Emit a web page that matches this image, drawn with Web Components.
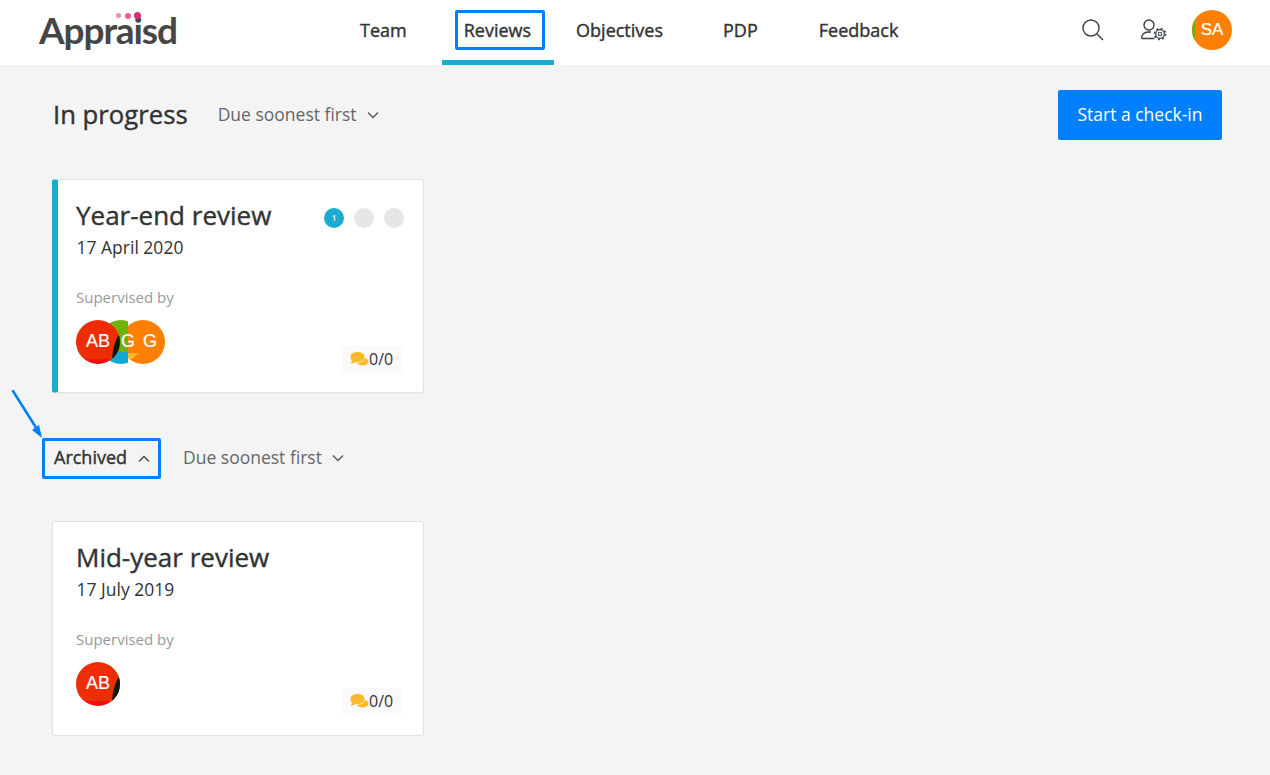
<!DOCTYPE html>
<html lang="en">
<head>
<meta charset="utf-8">
<title>Appraisd - Reviews</title>
<style>
  html, body { margin: 0; padding: 0; }
  body { background: #f4f4f4; color: #333; font-family: "Open Sans", "Liberation Sans", sans-serif; overflow: hidden; }
</style>
</head>
<body>
<app-header>
  <nav-tab gap="0">Team</nav-tab>
  <nav-tab gap="13" active>Reviews</nav-tab>
  <nav-tab gap="0">Objectives</nav-tab>
  <nav-tab gap="16">PDP</nav-tab>
  <nav-tab gap="17">Feedback</nav-tab>
</app-header>

<reviews-page>
  <section-row slot="progress">
    <span slot="title">In progress</span>
    <sort-select slot="sort">Due soonest first</sort-select>
    <start-button slot="action">Start a check-in</start-button>
  </section-row>
  <review-card slot="progress" current>
    <span slot="title">Year-end review</span>
    <span slot="date">17 April 2020</span>
    <step-dots slot="steps"></step-dots>
    <user-avatar slot="people" kind="red">AB</user-avatar>
    <user-avatar slot="people" kind="green">G</user-avatar>
    <user-avatar slot="people" kind="orange">G</user-avatar>
  </review-card>

  <archive-row slot="archived">
    <sort-select slot="sort">Due soonest first</sort-select>
  </archive-row>
  <review-card slot="archived">
    <span slot="title">Mid-year review</span>
    <span slot="date">17 July 2019</span>
    <user-avatar slot="people" kind="red">AB</user-avatar>
  </review-card>
</reviews-page>

<script>
// Clase base: crea el shadow root y pinta lo que devuelve getTemplate()
class BaseElement extends HTMLElement {
  constructor() {
    super();
    this.attachShadow({ mode: "open" });
  }

  connectedCallback() {
    const template = document.createElement("template");
    template.innerHTML = `<style>${this.getStyles()}</style>${this.getTemplate()}`;
    this.shadowRoot.appendChild(template.content.cloneNode(true));
  }
}

class AppHeader extends BaseElement {
  getStyles() {
    return `
      :host { display: flex; align-items: stretch; height: 65px; background: #fff; position: relative; }
      .logo { position: relative; width: 338px; padding-left: 39px; box-sizing: border-box; flex: none;
        font: 700 37px/60px Lato, sans-serif; color: #464646; letter-spacing: -1.100px; }
      .dots { position: absolute; left: 116px; top: 12px; display: flex; align-items: center; gap: 3.500px; }
      .dots i { display: block; border-radius: 50%; }
      .dots i:nth-child(1) { width: 5px; height: 5px; background: #f08cb8; }
      .dots i:nth-child(2) { width: 6px; height: 6px; background: #ec5c9c; }
      .dots i:nth-child(3) { width: 7px; height: 7px; background: #e2267f; }
      nav { display: flex; flex: 1; align-items: stretch; }
      .tools { display: flex; align-items: center; padding: 0 38px 5px 0; }
      .tools svg { display: block; fill: none; stroke: #3a3f4a; stroke-width: 1.400; }
      .search { margin-right: 35px; }
      .people { margin-right: 25px; }
    `;
  }

  getTemplate() {
    return `
      <div class="logo">Appraisd<span class="dots"><i></i><i></i><i></i></span></div>
      <nav><slot></slot></nav>
      <div class="tools">
        <svg class="search" width="24" height="24" viewBox="0 0 24 24">
          <circle cx="10" cy="10" r="8"/><path d="M16 16l6 6"/>
        </svg>
        <svg class="people" width="27" height="24" viewBox="0 0 27 24">
          <circle cx="9" cy="7" r="5"/>
          <path d="M1.500 20c0-3.500 3-6 6.500-6h3M1.500 20.500h13"/>
          <circle cx="20" cy="16" r="4.300" stroke-width="1.200"/>
          <circle cx="20" cy="16" r="5.500" stroke-width="1.700" stroke-dasharray="1.900 2.420"/>
          <circle cx="20" cy="16" r="1.700" stroke-width="1.100"/>
        </svg>
        <user-avatar kind="orange" small>SA</user-avatar>
      </div>
    `;
  }
}

class NavTab extends BaseElement {
  getStyles() {
    const gap = this.getAttribute("gap") || 0;
    return `
      :host { display: flex; align-items: center; height: 65px; box-sizing: border-box; padding: 0 22px;
        margin-left: ${gap}px; border-bottom: 5px solid transparent;
        font: 500 18px "Open Sans", sans-serif; color: #333; -webkit-text-stroke: .4px #333; }
      :host([active]) { border-bottom-color: #1aaccf; padding: 0 9px 0 13px; }
      :host([active]) span { display: block; padding: 0 11px 0 6px; border: 3px solid #0080ff; border-radius: 2px;
        height: 40px; box-sizing: border-box; line-height: 34px; }
    `;
  }

  getTemplate() {
    return `<span><slot></slot></span>`;
  }
}

class ReviewsPage extends BaseElement {
  getStyles() {
    return `
      :host { display: block; padding: 25px 48px 0 52px; }
      .archived { display: block; margin-top: 45px; }
    `;
  }

  getTemplate() {
    return `
      <slot name="progress"></slot>
      <div class="archived"><slot name="archived"></slot></div>
    `;
  }
}

class SectionRow extends BaseElement {
  getStyles() {
    return `
      :host { display: flex; align-items: center; height: 50px; margin-bottom: 39px; }
      .title { font: 500 25.700px "Open Sans", sans-serif; color: #333; margin: -2px 30px 0 1px; -webkit-text-stroke: .4px #333; }
      .grow { flex: 1; }
      ::slotted(sort-select) { margin-top: -2px; }
    `;
  }

  getTemplate() {
    return `
      <div class="title"><slot name="title"></slot></div>
      <slot name="sort"></slot>
      <div class="grow"></div>
      <slot name="action"></slot>
    `;
  }
}

class ArchiveRow extends BaseElement {
  getStyles() {
    return `
      :host { display: flex; align-items: center; height: 41px; margin-bottom: 42px; position: relative; }
      .toggle { display: flex; align-items: center; height: 41px; width: 119px; box-sizing: border-box; margin-left: -10px;
        padding: 0 0 3px 9px; border: 3px solid #0080ff; border-radius: 2px; margin-right: 22px;
        font: 500 18px "Open Sans", sans-serif; color: #333; -webkit-text-stroke: .4px #333; }
      .toggle svg { margin: 3px 0 0 11px; fill: none; stroke: #444; stroke-width: 1.300; }
      .arrow { position: absolute; left: -43px; top: -51px; overflow: visible; }
      ::slotted(sort-select) { margin-top: -3px; }
    `;
  }

  getTemplate() {
    return `
      <svg class="arrow" width="34" height="52" viewBox="0 0 34 52">
        <path d="M4 4l27 43" stroke="#0080ff" stroke-width="2.500" stroke-linecap="round" fill="none"/>
        <path d="M33 51l-10-8 7-5z" fill="#0080ff"/>
      </svg>
      <div class="toggle">Archived
        <svg width="12" height="8" viewBox="0 0 12 8"><path d="M1 6.500l5-5 5 5"/></svg>
      </div>
      <slot name="sort"></slot>
    `;
  }
}

class SortSelect extends BaseElement {
  getStyles() {
    return `
      :host { display: flex; align-items: center; font: 400 17.500px "Open Sans", sans-serif; color: #666; }
      svg { margin: 2px 0 0 10px; fill: none; stroke: #555; stroke-width: 1.300; }
    `;
  }

  getTemplate() {
    return `<slot></slot><svg width="12" height="8" viewBox="0 0 12 8"><path d="M1 1.500l5 5 5-5"/></svg>`;
  }
}

class StartButton extends BaseElement {
  getStyles() {
    return `
      :host { display: flex; align-items: center; justify-content: center; width: 164px; height: 50px;
        box-sizing: border-box; padding-bottom: 2px;
        background: #007fff; color: #fff; border-radius: 2px; font: 500 17.500px "Open Sans", sans-serif; }
    `;
  }

  getTemplate() {
    return `<slot></slot>`;
  }
}

class ReviewCard extends BaseElement {
  getStyles() {
    return `
      :host { display: block; width: 372px; box-sizing: border-box; background: #fff; border: 1px solid #e2e2e2;
        border-radius: 3px; padding: 20px 19px 20px 23px; box-shadow: 0 1px 1px rgba(0,0,0,.04); }
      :host([current]) { border-left: 6px solid #1aaccf; padding: 20px 19px 19px 18px; }
      .top { display: flex; justify-content: space-between; align-items: flex-start; height: 32px; }
      .title { font: 500 26px/32px "Open Sans", sans-serif; color: #333; margin-top: -1px; -webkit-text-stroke: .4px #333; }
      .date { font: 400 17.500px/24px "Open Sans", sans-serif; color: #333; margin-top: 3px; padding-left: .5px; }
      .label { font: 400 15px/20px "Open Sans", sans-serif; color: #999; margin-top: 28px; }
      .bottom { display: flex; justify-content: space-between; align-items: flex-end; margin-top: 13px; height: 53px; }
      .people { display: flex; align-self: flex-start; }
    `;
  }

  getTemplate() {
    return `
      <div class="top">
        <div class="title"><slot name="title"></slot></div>
        <slot name="steps"></slot>
      </div>
      <div class="date"><slot name="date"></slot></div>
      <div class="label">Supervised by</div>
      <div class="bottom">
        <div class="people"><slot name="people"></slot></div>
        <comment-badge>0/0</comment-badge>
      </div>
    `;
  }
}

class StepDots extends BaseElement {
  getStyles() {
    return `
      :host { display: flex; gap: 10px; margin-top: 8px; }
      span { display: block; width: 20px; height: 20px; border-radius: 50%; background: #e6e6e6;
        font: 600 8px/20px "Open Sans", sans-serif; color: #fff; text-align: center; }
      span.on { background: #1aaccf; }
    `;
  }

  getTemplate() {
    return `<span class="on">1</span><span></span><span></span>`;
  }
}

class UserAvatar extends BaseElement {
  getStyles() {
    return `
      :host { display: flex; align-items: center; justify-content: center; position: relative; overflow: hidden;
        flex: none; width: 44px; height: 44px; border-radius: 50%; color: #fff; box-sizing: border-box;
        font: 400 18px "Liberation Sans", Arial, sans-serif; -webkit-text-stroke: .2px #fff; }
      :host([small]) { width: 40px; height: 40px; font-size: 17px; }
      :host([kind="red"]) { background: linear-gradient(#ee2d05 88%, #f01010 88%); z-index: 3; }
      /* el avatar verde solo pinta sus primeros 29px, el resto deja ver el naranja */
      :host([kind="green"]) { background: linear-gradient(#72b00a 72%, #14a9d3 72%) no-repeat 0 0 / 29px 100%;
        z-index: 2; margin-left: -21px; padding-left: 14px; }
      :host([kind="orange"]) { background: #ff8000; z-index: 1; margin-left: -22px; padding-left: 14px; }
      :host([small][kind="orange"]) { margin-left: 0; padding-left: 0; }
      .bit { display: none; position: absolute; }
      :host([kind="red"]) .bit { display: block; right: -3px; top: 11px; width: 9px; height: 32px; border-radius: 50%;
        background: #0b1a02; transform: rotate(16deg); }
      :host([small][kind="orange"]) .bit { display: block; left: -1px; top: 0; width: 4px; height: 40px; background: #72b00a; }
      .yellow { display: none; position: absolute; }
      :host([kind="orange"]:not([small])) .yellow { display: block; left: 7px; top: 33px;
        border-top: 9px solid #fdb92c; border-right: 11px solid transparent; }
      span { position: relative; top: -1px; }
      :host([small]) span { top: 0; }
    `;
  }

  getTemplate() {
    return `<i class="bit"></i><i class="yellow"></i><span><slot></slot></span>`;
  }
}

class CommentBadge extends BaseElement {
  getStyles() {
    return `
      :host { display: flex; align-items: center; height: 27px; width: 62px; box-sizing: border-box; padding: 0 0 2px 9px;
        margin-right: 1px; background: #fafafa; border-radius: 6px; font: 500 16px "Open Sans", sans-serif; color: #333; }
      svg { display: block; flex: none; }
    `;
  }

  getTemplate() {
    return `
      <svg width="19" height="15" viewBox="0 0 19 15">
        <ellipse cx="12.500" cy="10.500" rx="6" ry="4" fill="#fdb92c"/>
        <ellipse cx="7.500" cy="6" rx="7.500" ry="5.500" fill="#fdb92c" stroke="#fafafa" stroke-width=".7"/>
        <path d="M2 9l-1 4 5-2z" fill="#fdb92c"/>
      </svg>
      <slot></slot>
    `;
  }
}

customElements.define("app-header", AppHeader);
customElements.define("nav-tab", NavTab);
customElements.define("reviews-page", ReviewsPage);
customElements.define("section-row", SectionRow);
customElements.define("archive-row", ArchiveRow);
customElements.define("sort-select", SortSelect);
customElements.define("start-button", StartButton);
customElements.define("review-card", ReviewCard);
customElements.define("step-dots", StepDots);
customElements.define("user-avatar", UserAvatar);
customElements.define("comment-badge", CommentBadge);
</script>
</body>
</html>
